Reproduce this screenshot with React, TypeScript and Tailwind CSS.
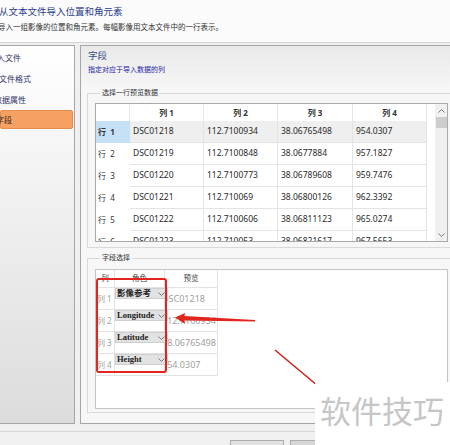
import React from 'react';

const previewRows = [
  ['DSC01218', '112.7100934', '38.06765498', '954.0307'],
  ['DSC01219', '112.7100848', '38.0677884', '957.1827'],
  ['DSC01220', '112.7100773', '38.06789608', '959.7476'],
  ['DSC01221', '112.710069', '38.06800126', '962.3392'],
  ['DSC01222', '112.7100606', '38.06811123', '965.0274'],
  ['DSC01223', '112.710053', '38.06821617', '967.5653'],
];

const colWidths = ['w-[74px]', 'w-[74px]', 'w-[75px]', 'w-[74px]'];

const fields = [
  { col: '列 1', role: '影像参考', preview: 'DSC01218' },
  { col: '列 2', role: 'Longitude', preview: '112.7100934' },
  { col: '列 3', role: 'Latitude', preview: '38.06765498' },
  { col: '列 4', role: 'Height', preview: '954.0307' },
];

function Chevron({ up = false, className = '' }: { up?: boolean; className?: string }) {
  return (
    <svg width="7" height="4" viewBox="0 0 7 4" className={className}>
      <polyline
        points={up ? '0.5,3.5 3.5,0.5 6.5,3.5' : '0.5,0.5 3.5,3.5 6.5,0.5'}
        fill="none"
        stroke="#7a7a7a"
        strokeWidth="1"
      />
    </svg>
  );
}

function PreviewTable() {
  return (
    <div className="w-[353px] h-[139px] border border-[#a9a9a9] bg-white flex overflow-hidden">
      <div className="w-[331px] shrink-0 flex flex-col">
        {/* header */}
        <div className="flex h-[17px] shrink-0">
          <div className="w-[34px] shrink-0 border-r border-[#e6e6e6]" />
          {colWidths.map((w, i) => (
            <div
              key={i}
              className={`${w} shrink-0 border-r border-[#e6e6e6] flex items-center justify-center text-[8px] font-bold text-[#333]`}
            >
              列 {i + 1}
            </div>
          ))}
        </div>
        {previewRows.map((r, ri) => (
          <div key={ri} className="flex h-[22px] shrink-0">
            <div
              className={`w-[34px] shrink-0 flex items-center pl-[2px] text-[8px] text-[#333] ${
                ri === 0 ? 'bg-[#c6e0f6] font-bold text-[#111]' : ''
              }`}
            >
              行&nbsp;&nbsp;{ri + 1}
            </div>
            {r.map((v, ci) => (
              <div
                key={ci}
                className={`${colWidths[ci]} shrink-0 border-r border-b border-[#e4e4e4] flex items-center pl-[3px] text-[8.5px] text-[#2a2a2a] ${
                  ri === 0 ? 'bg-[#efefef]' : ''
                }`}
              >
                {v}
              </div>
            ))}
          </div>
        ))}
      </div>
      <div className="w-[8px] shrink-0" />
      {/* scrollbar */}
      <div className="w-[12px] shrink-0 bg-[#f0f0f0] flex flex-col items-center">
        <div className="h-[13px] flex items-center justify-center">
          <Chevron up />
        </div>
        <div className="w-[11px] h-[11px] bg-[#cdcdcd]" />
        <div className="flex-1" />
        <div className="h-[13px] flex items-center justify-center">
          <Chevron />
        </div>
      </div>
    </div>
  );
}

function FieldGrid() {
  return (
    <div className="w-[353px] h-[140px] bg-white border border-[#c4c4c4]">
      <div className="w-[122px] flex flex-col">
        <div className="flex h-[18px] text-[7.5px] text-[#444]">
          <div className="w-[19px] shrink-0 border-r border-b border-[#e3e3e3] flex items-center justify-center">列</div>
          <div className="w-[50px] shrink-0 border-r border-b border-[#e3e3e3] flex items-center justify-center">角色</div>
          <div className="w-[53px] shrink-0 border-r border-b border-[#e3e3e3] flex items-center justify-center">预览</div>
        </div>
        {fields.map((f) => (
          <div key={f.col} className="flex h-[22px]">
            <div className="w-[19px] shrink-0 border-r border-b border-[#e3e3e3] flex items-center pl-[1px] text-[8px] text-[#a0a0a0] whitespace-nowrap overflow-hidden">
              {f.col}
            </div>
            <div className="w-[50px] shrink-0 border-r border-b border-[#e3e3e3] relative z-10">
              <div className="w-[53px] h-[11px] bg-[#e2e2e2] border border-[#cfcfcf] flex items-center justify-between pl-[1px] pr-[2px]">
                <span className="font-['Liberation_Serif','Noto_Sans_CJK_SC',serif] font-bold text-[8.5px] leading-none text-[#222]">
                  {f.role}
                </span>
                <Chevron />
              </div>
            </div>
            <div className="w-[53px] shrink-0 border-r border-b border-[#e3e3e3] flex items-center overflow-hidden whitespace-nowrap text-[9px] text-[#a0a0a0]">
              <span className="ml-[-3px]">{f.preview}</span>
            </div>
          </div>
        ))}
      </div>
    </div>
  );
}

export default function App() {
  return (
    <div className="w-[450px] h-[445px] overflow-hidden relative bg-[#f0f0f0] font-['Noto_Sans','Noto_Sans_CJK_SC',sans-serif]">
      {/* dialog header */}
      <div className="h-[43px] bg-[#fbfbfb] border-b border-[#d3d3d3] pt-[6px] whitespace-nowrap">
        <div className="ml-[-1px] text-[9.5px] leading-[12px] text-[#2c3d8c]">从文本文件导入位置和角元素</div>
        <div className="ml-[-2px] mt-[3px] text-[7.5px] leading-[12px] text-[#333]">
          导入一组影像的位置和角元素。每幅影像用文本文件中的一行表示。
        </div>
      </div>

      {/* body */}
      <div className="flex mt-[2px] h-[379px]">
        {/* steps */}
        <div className="w-[75px] shrink-0 border-y border-r border-[#a6a6a6] bg-linear-to-b from-white to-[#dcdcdc] pt-[1px] overflow-hidden whitespace-nowrap text-[8px] text-[#30306a]">
          <div className="h-[21px] flex items-center ml-[-11px]">导入文件</div>
          <div className="h-[21px] flex items-center ml-[-1px]">文件格式</div>
          <div className="h-[21px] flex items-center ml-[-6px]">数据属性</div>
          <div className="h-[19px] w-[73px] flex items-center bg-[#f6a062] border border-[#e58c4e] rounded-[2px]">
            <span className="ml-[-5px] text-[#3a2a20]">字段</span>
          </div>
        </div>

        {/* page */}
        <div className="ml-[5px] w-[380px] shrink-0 border border-[#a6a6a6] bg-linear-to-b from-[#e9e9e9] to-[#f7f7f7] to-[12%] pl-[6px] pt-[4px]">
          <div className="ml-[1px] text-[9.5px] leading-[12px] text-[#3b4e8e]">字段</div>
          <div className="ml-[1px] mt-[3px] text-[7px] leading-[10px] text-[#2525a8]">指定对应于导入数据的列</div>

          <fieldset className="mt-[13px] w-[366px] border border-[#d9d9d9] px-[7px] pt-[5px] pb-[5px]">
            <legend className="ml-[5px] px-[2px] text-[7px] leading-[10px] text-[#333]">选择一行预览数据</legend>
            <PreviewTable />
          </fieldset>

          <fieldset className="mt-[5px] w-[366px] border border-[#d9d9d9] px-[7px] pt-[6px] pb-[3px]">
            <legend className="ml-[5px] px-[2px] text-[7px] leading-[10px] text-[#333]">字段选择</legend>
            <FieldGrid />
          </fieldset>
        </div>
      </div>

      {/* footer */}
      <div className="mt-[7px] border-t border-[#d6d6d6] pt-[8px] pl-[230px] flex gap-[6px]">
        <button className="w-[54px] h-[20px] border border-[#adadad] bg-[#e1e1e1] text-[8px] text-[#333] flex justify-center pt-[2px]">上一步</button>
        <button className="w-[54px] h-[20px] border border-[#adadad] bg-[#d6d6d6] text-[8px] text-[#333] flex justify-center pt-[2px]">下一步</button>
      </div>

      {/* annotations over the screenshot */}
      <div className="absolute left-[96px] top-[278px] w-[71px] h-[95px] border-2 border-[#e3261d] rounded-[3px] z-20" />
      <svg className="absolute left-0 top-0 z-20" width="450" height="445" viewBox="0 0 450 445">
        <polygon points="175,317.5 185,313 184.5,316 255,320 255,321.5 184.5,320.5 185,324" fill="#e3261d" />
        <line x1="275" y1="350" x2="318" y2="386" stroke="#c9231b" strokeWidth="1.6" />
      </svg>
      <div className="absolute left-[315px] top-[382px] w-[135px] h-[63px] bg-white z-30 pl-[5px] pt-[10px]">
        <span className="font-['Noto_Sans_CJK_SC',sans-serif] text-[31px] leading-[36px] text-[#c6c6c6]">软件技巧</span>
      </div>
    </div>
  );
}
